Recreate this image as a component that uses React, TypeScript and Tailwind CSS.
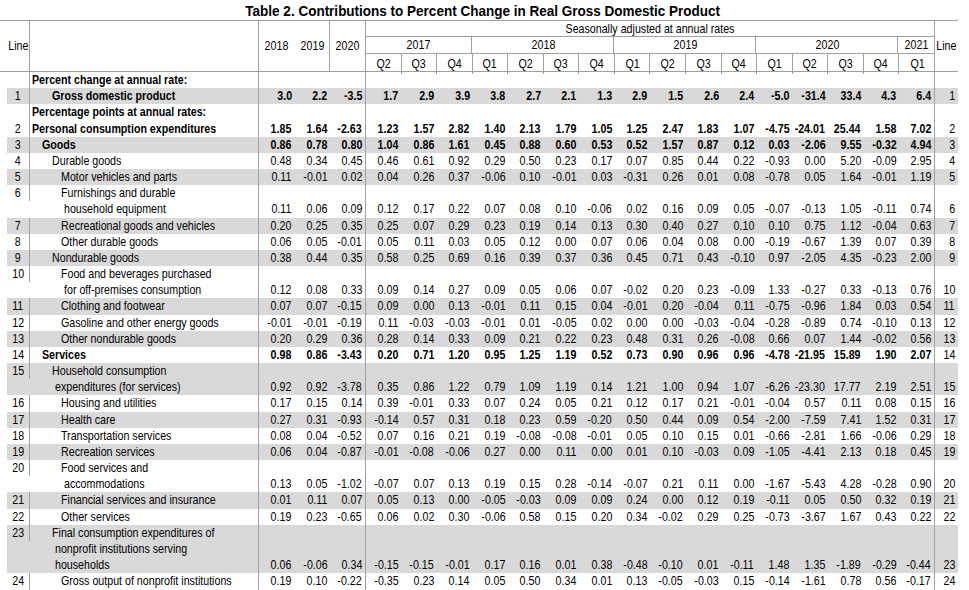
import React from "react";

type RowT = {
  n: string;
  lines: [string, string][];
  v?: string;
  bold?: boolean;
  gray?: boolean;
};

const rows: RowT[] = [
  { n: "", lines: [["Percent change at annual rate:", "pl-[2px]"]], bold: true },
  { n: "1", lines: [["Gross domestic product", "pl-[22px]"]], bold: true, gray: true, v: "3.0 2.2 -3.5 1.7 2.9 3.9 3.8 2.7 2.1 1.3 2.9 1.5 2.6 2.4 -5.0 -31.4 33.4 4.3 6.4" },
  { n: "", lines: [["Percentage points at annual rates:", "pl-[2px]"]], bold: true },
  { n: "2", lines: [["Personal consumption expenditures", "pl-[2px]"]], bold: true, v: "1.85 1.64 -2.63 1.23 1.57 2.82 1.40 2.13 1.79 1.05 1.25 2.47 1.83 1.07 -4.75 -24.01 25.44 1.58 7.02" },
  { n: "3", lines: [["Goods", "pl-[12px]"]], bold: true, gray: true, v: "0.86 0.78 0.80 1.04 0.86 1.61 0.45 0.88 0.60 0.53 0.52 1.57 0.87 0.12 0.03 -2.06 9.55 -0.32 4.94" },
  { n: "4", lines: [["Durable goods", "pl-[22px]"]], v: "0.48 0.34 0.45 0.46 0.61 0.92 0.29 0.50 0.23 0.17 0.07 0.85 0.44 0.22 -0.93 0.00 5.20 -0.09 2.95" },
  { n: "5", lines: [["Motor vehicles and parts", "pl-[31px]"]], gray: true, v: "0.11 -0.01 0.02 0.04 0.26 0.37 -0.06 0.10 -0.01 0.03 -0.31 0.26 0.01 0.08 -0.78 0.05 1.64 -0.01 1.19" },
  { n: "6", lines: [["Furnishings and durable", "pl-[31px]"], ["household equipment", "pl-[34px]"]], v: "0.11 0.06 0.09 0.12 0.17 0.22 0.07 0.08 0.10 -0.06 0.02 0.16 0.09 0.05 -0.07 -0.13 1.05 -0.11 0.74" },
  { n: "7", lines: [["Recreational goods and vehicles", "pl-[31px]"]], gray: true, v: "0.20 0.25 0.35 0.25 0.07 0.29 0.23 0.19 0.14 0.13 0.30 0.40 0.27 0.10 0.10 0.75 1.12 -0.04 0.63" },
  { n: "8", lines: [["Other durable goods", "pl-[31px]"]], v: "0.06 0.05 -0.01 0.05 0.11 0.03 0.05 0.12 0.00 0.07 0.06 0.04 0.08 0.00 -0.19 -0.67 1.39 0.07 0.39" },
  { n: "9", lines: [["Nondurable goods", "pl-[22px]"]], gray: true, v: "0.38 0.44 0.35 0.58 0.25 0.69 0.16 0.39 0.37 0.36 0.45 0.71 0.43 -0.10 0.97 -2.05 4.35 -0.23 2.00" },
  { n: "10", lines: [["Food and beverages purchased", "pl-[31px]"], ["for off-premises consumption", "pl-[34px]"]], v: "0.12 0.08 0.33 0.09 0.14 0.27 0.09 0.05 0.06 0.07 -0.02 0.20 0.23 -0.09 1.33 -0.27 0.33 -0.13 0.76" },
  { n: "11", lines: [["Clothing and footwear", "pl-[31px]"]], gray: true, v: "0.07 0.07 -0.15 0.09 0.00 0.13 -0.01 0.11 0.15 0.04 -0.01 0.20 -0.04 0.11 -0.75 -0.96 1.84 0.03 0.54" },
  { n: "12", lines: [["Gasoline and other energy goods", "pl-[31px]"]], v: "-0.01 -0.01 -0.19 0.11 -0.03 -0.03 -0.01 0.01 -0.05 0.02 0.00 0.00 -0.03 -0.04 -0.28 -0.89 0.74 -0.10 0.13" },
  { n: "13", lines: [["Other nondurable goods", "pl-[31px]"]], gray: true, v: "0.20 0.29 0.36 0.28 0.14 0.33 0.09 0.21 0.22 0.23 0.48 0.31 0.26 -0.08 0.66 0.07 1.44 -0.02 0.56" },
  { n: "14", lines: [["Services", "pl-[12px]"]], bold: true, v: "0.98 0.86 -3.43 0.20 0.71 1.20 0.95 1.25 1.19 0.52 0.73 0.90 0.96 0.96 -4.78 -21.95 15.89 1.90 2.07" },
  { n: "15", lines: [["Household consumption", "pl-[22px]"], ["expenditures (for services)", "pl-[25px]"]], gray: true, v: "0.92 0.92 -3.78 0.35 0.86 1.22 0.79 1.09 1.19 0.14 1.21 1.00 0.94 1.07 -6.26 -23.30 17.77 2.19 2.51" },
  { n: "16", lines: [["Housing and utilities", "pl-[31px]"]], v: "0.17 0.15 0.14 0.39 -0.01 0.33 0.07 0.24 0.05 0.21 0.12 0.17 0.21 -0.01 -0.04 0.57 0.11 0.08 0.15" },
  { n: "17", lines: [["Health care", "pl-[31px]"]], gray: true, v: "0.27 0.31 -0.93 -0.14 0.57 0.31 0.18 0.23 0.59 -0.20 0.50 0.44 0.09 0.54 -2.00 -7.59 7.41 1.52 0.31" },
  { n: "18", lines: [["Transportation services", "pl-[31px]"]], v: "0.08 0.04 -0.52 0.07 0.16 0.21 0.19 -0.08 -0.08 -0.01 0.05 0.10 0.15 0.01 -0.66 -2.81 1.66 -0.06 0.29" },
  { n: "19", lines: [["Recreation services", "pl-[31px]"]], gray: true, v: "0.06 0.04 -0.87 -0.01 -0.08 -0.06 0.27 0.00 0.11 0.00 0.01 0.10 -0.03 0.09 -1.05 -4.41 2.13 0.18 0.45" },
  { n: "20", lines: [["Food services and", "pl-[31px]"], ["accommodations", "pl-[34px]"]], v: "0.13 0.05 -1.02 -0.07 0.07 0.13 0.19 0.15 0.28 -0.14 -0.07 0.21 0.11 0.00 -1.67 -5.43 4.28 -0.28 0.90" },
  { n: "21", lines: [["Financial services and insurance", "pl-[31px]"]], gray: true, v: "0.01 0.11 0.07 0.05 0.13 0.00 -0.05 -0.03 0.09 0.09 0.24 0.00 0.12 0.19 -0.11 0.05 0.50 0.32 0.19" },
  { n: "22", lines: [["Other services", "pl-[31px]"]], v: "0.19 0.23 -0.65 0.06 0.02 0.30 -0.06 0.58 0.15 0.20 0.34 -0.02 0.29 0.25 -0.73 -3.67 1.67 0.43 0.22" },
  { n: "23", lines: [["Final consumption expenditures of", "pl-[22px]"], ["nonprofit institutions serving", "pl-[25px]"], ["households", "pl-[25px]"]], gray: true, v: "0.06 -0.06 0.34 -0.15 -0.15 -0.01 0.17 0.16 0.01 0.38 -0.48 -0.10 0.01 -0.11 1.48 1.35 -1.89 -0.29 -0.44" },
  { n: "24", lines: [["Gross output of nonprofit institutions", "pl-[31px]"]], v: "0.19 0.10 -0.22 -0.35 0.23 0.14 0.05 0.50 0.34 0.01 0.13 -0.05 -0.03 0.15 -0.14 -1.61 0.78 0.56 -0.17" },
];

const LINE = "h-[16.18px] leading-[16.18px] whitespace-nowrap";
const BORDER = "border-[#a0a0a0]";

// Condensed text helpers (the reference uses a narrow face)
function TL({ children }: { children: React.ReactNode }) {
  return <span className="inline-block whitespace-nowrap origin-left scale-x-[0.82]">{children}</span>;
}
function TR({ children }: { children: React.ReactNode }) {
  return <span className="inline-block whitespace-nowrap origin-right scale-x-[0.82]">{children}</span>;
}
function TC({ children }: { children: React.ReactNode }) {
  return <span className="inline-block whitespace-nowrap origin-center scale-x-[0.82]">{children}</span>;
}

function cellClass(i: number) {
  if (i < 3) return i === 2 ? "w-[35.667px] border-r border-[#a0a0a0]" : "w-[35.667px]";
  return i === 18 ? "w-[35.5625px] border-r border-[#a0a0a0]" : "w-[35.5625px]";
}

function BodyRow({ r }: { r: RowT }) {
  const vals = r.v ? r.v.split(" ") : Array.from({ length: 19 }, () => "");
  return (
    <div className="flex">
      <div className="w-[7px] shrink-0" />
      <div className={`flex ${r.gray ? "bg-[#d9d9d9]" : ""} ${r.bold ? "font-bold" : ""}`}>
        <div className={`w-[23px] shrink-0 border-r ${BORDER} flex justify-center font-normal ${LINE}`}>
          <TC>{r.n}</TC>
        </div>
        <div className={`w-[229px] shrink-0 border-r ${BORDER}`}>
          {r.lines.map(([t, pl], k) => (
            <div key={k} className={`${LINE} ${pl}`}>
              <TL>{t}</TL>
            </div>
          ))}
        </div>
        {vals.map((v, i) => (
          <div key={i} className={`shrink-0 flex flex-col justify-end ${cellClass(i)}`}>
            <div className={`${LINE} flex justify-end pr-[3px]`}>
              <TR>{v}</TR>
            </div>
          </div>
        ))}
        <div className="w-[23px] shrink-0 flex flex-col justify-end font-normal">
          <div className={`${LINE} flex justify-end pr-[3px]`}>
            <TR>{r.n}</TR>
          </div>
        </div>
      </div>
    </div>
  );
}

const years: [string, number][] = [
  ["2017", 3],
  ["2018", 4],
  ["2019", 4],
  ["2020", 4],
  ["2021", 1],
];

const quarters = ["Q2", "Q3", "Q4", "Q1", "Q2", "Q3", "Q4", "Q1", "Q2", "Q3", "Q4", "Q1", "Q2", "Q3", "Q4", "Q1"];

export default function App() {
  return (
    <div className="w-[969px] h-[590px] overflow-hidden bg-white text-black text-[13px] font-['Liberation_Sans','Arial',sans-serif]">
      <div className="w-[958px] pl-[7px] h-[20px] leading-[21px] flex justify-center font-bold text-[15px]">
        <span className="inline-block whitespace-nowrap origin-center scale-x-[0.9]">
          Table 2. Contributions to Percent Change in Real Gross Domestic Product
        </span>
      </div>
      <div className={`w-[958px] flex border-t border-b ${BORDER} h-[52px]`}>
        <div className="w-[7px] shrink-0" />
        <div className={`w-[23px] shrink-0 border-r ${BORDER} flex items-center justify-center`}>
          <TC>Line</TC>
        </div>
        <div className={`w-[229px] shrink-0 border-r ${BORDER}`} />
        <div className="w-[35.667px] shrink-0 flex items-center justify-center">
          <TC>2018</TC>
        </div>
        <div className={`w-[35.667px] shrink-0 border-r ${BORDER} flex items-center justify-center`}>
          <TC>2019</TC>
        </div>
        <div className={`w-[35.667px] shrink-0 border-r ${BORDER} flex items-center justify-center`}>
          <TC>2020</TC>
        </div>
        <div className={`w-[569px] shrink-0 border-r ${BORDER} flex flex-col`}>
          <div className={`h-[16px] border-b ${BORDER} leading-[15px] flex justify-center`}>
            <TC>Seasonally adjusted at annual rates</TC>
          </div>
          <div className={`h-[17px] border-b ${BORDER} flex`}>
            {years.map(([y, n], i) => (
              <div
                key={y}
                className={`leading-[16px] flex justify-center ${i < years.length - 1 ? "border-r border-[#a0a0a0]" : ""} ${n === 3 ? "w-[106.6875px]" : n === 4 ? "w-[142.25px]" : "w-[35.5625px]"}`}
              >
                <TC>{y}</TC>
              </div>
            ))}
          </div>
          <div className="flex flex-1">
            {quarters.map((q, i) => (
              <div
                key={i}
                className={`w-[35.5625px] shrink-0 flex items-center justify-center ${i < 15 ? "border-r border-[#a0a0a0]" : ""}`}
              >
                <TC>{q}</TC>
              </div>
            ))}
          </div>
        </div>
        <div className="w-[23px] shrink-0 flex items-center justify-center">
          <TC>Line</TC>
        </div>
      </div>
      <div className={`w-[958px] border-b ${BORDER}`}>
        {rows.map((r, i) => (
          <BodyRow key={i} r={r} />
        ))}
      </div>
    </div>
  );
}
